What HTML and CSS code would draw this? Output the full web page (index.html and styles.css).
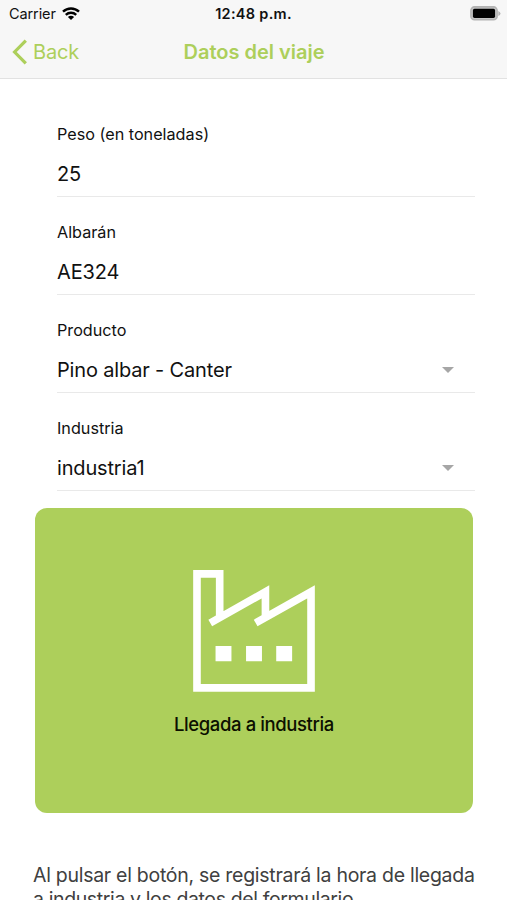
FILE: index.html
```
<!DOCTYPE html>
<html lang="es">
  <head>
    <meta charset="UTF-8">
    <title>Datos del viaje</title>
    <link rel="stylesheet" href="styles.css">
  </head>
  <body>
    <header class="header">
      <div class="status-bar">
        <div class="carrier">
          <span class="carrier-name">Carrier</span>
          <svg class="wifi" viewBox="0 0 18 14">
            <path d="M1 4.7a11.5 11.5 0 0 1 16 0M3.8 7.8a7.6 7.6 0 0 1 10.4 0" fill="none" stroke="#000" stroke-width="2.4"/>
            <path d="M9 13.1L5.9 10.1a4.4 4.4 0 0 1 6.2 0z"/>
          </svg>
        </div>
        <span class="clock">12:48 p.m.</span>
        <svg class="battery" viewBox="0 0 31 15">
          <rect x="0.9" y="0.9" width="26.2" height="12.9" rx="3.6" fill="#c4c4c4" stroke="#b3b3b3" stroke-width="1.6"/>
          <rect x="2.9" y="2.8" width="22.2" height="9.1" rx="1.6"/>
          <path d="M28.3 5v5q2.2-1 2.2-2.5T28.3 5z" fill="#b3b3b3"/>
        </svg>
      </div>
      <div class="nav-bar">
        <a class="back">
          <svg class="chevron" viewBox="0 0 16 26"><path d="M13.8 1.6L2.6 13l11.2 11.4" fill="none" stroke="currentColor" stroke-width="3.2"/></svg>
          <span class="back-text">Back</span>
        </a>
        <h1 class="title">Datos del viaje</h1>
      </div>
    </header>

    <main class="content">
      <div class="form">
        <div class="field">
          <div class="label">Peso (en toneladas)</div>
          <div class="value"><span>25</span></div>
        </div>
        <div class="field">
          <div class="label">Albarán</div>
          <div class="value"><span>AE324</span></div>
        </div>
        <div class="field">
          <div class="label">Producto</div>
          <div class="value"><span>Pino albar - Canter</span><i class="arrow"></i></div>
        </div>
        <div class="field">
          <div class="label">Industria</div>
          <div class="value"><span>industria1</span><i class="arrow"></i></div>
        </div>
      </div>

      <div class="card">
        <svg class="factory" viewBox="68 58 368 368">
          <path d="M120 218L286.5 124V204M257 218L424 124V413.5H80V69.5H148.5V200" fill="none" stroke="#fff" stroke-width="23"/>
          <path d="M136 287h48v46h-48zM228 287h48v46h-48zM319 287h48v46h-48z" fill="#fff"/>
        </svg>
        <span class="card-text">Llegada a industria</span>
      </div>

      <p class="hint">Al pulsar el botón, se registrará la hora de llegada<br><span class="hint-end">a industria y los datos del formulario.</span></p>
    </main>
  </body>
</html>
```
FILE: styles.css
```
body {
    margin: 0;
    height: 900px;
    overflow: hidden;
    background: #fff;
    color: #111;
    font-family: Inter, "Liberation Sans", sans-serif;
}
.header {
    height: 78px;
    background: #f7f7f7;
    border-bottom: 1px solid #e2e2e2;
}
.status-bar {
    display: grid;
    grid-template-columns: 1fr auto 1fr;
    align-items: center;
    height: 27px;
    padding: 0 6px 0 9px;
}
.carrier {
    display: flex;
    align-items: center;
    gap: 6px;
}
.carrier-name {
    font-size: 14.5px;
    letter-spacing: -0.1px;
}
.wifi {
    width: 18px;
    height: 14px;
}
.clock {
    margin-right: 3px;
    font-size: 14.5px;
    font-weight: 600;
    letter-spacing: 0.3px;
}
.battery {
    width: 31px;
    height: 15px;
    justify-self: end;
}
.nav-bar {
    display: grid;
    grid-template-columns: 1fr auto 1fr;
    align-items: center;
    height: 49px;
    padding: 0 12px;
    color: #adcf5b;
}
.back {
    display: flex;
    align-items: center;
    gap: 5px;
}
.chevron {
    width: 16px;
    height: 26px;
}
.back-text {
    font-size: 20px;
    letter-spacing: -0.2px;
}
.title {
    margin: 0 0 0 1px;
    font-size: 20px;
    font-weight: 600;
}
.form {
    padding: 20px 32px 0 57px;
}
.field {
    box-sizing: border-box;
    height: 98.1px;
    padding-top: 23px;
    border-bottom: 1px solid #e9e9e9;
}
.label {
    font-size: 16.2px;
    line-height: 24px;
}
.value {
    display: flex;
    justify-content: space-between;
    align-items: center;
    height: 28px;
    margin-top: 14px;
    padding-right: 21px;
    font-size: 20px;
    letter-spacing: -0.17px;
}
.arrow {
    border: 6px solid transparent;
    border-top-color: #a6a6a6;
    border-bottom: 0;
}
.card {
    box-sizing: border-box;
    display: flex;
    flex-direction: column;
    align-items: center;
    width: 437.5px;
    height: 305px;
    margin: 17px 0 0 35.2px;
    padding-top: 61.2px;
    border-radius: 12px;
    background: #adcf5b;
}
.factory {
    width: 122px;
    height: 122px;
}
.card-text {
    margin-top: 20.5px;
    color: #0c1000;
    font-size: 18.5px;
    font-weight: 500;
    line-height: 24px;
    letter-spacing: -0.4px;
}
.hint {
    margin: 50px 0 0 33px;
    color: #404040;
    font-size: 19.5px;
    line-height: 24px;
    letter-spacing: -0.28px;
    white-space: nowrap;
}
.hint-end {
    letter-spacing: -0.38px;
}
```
